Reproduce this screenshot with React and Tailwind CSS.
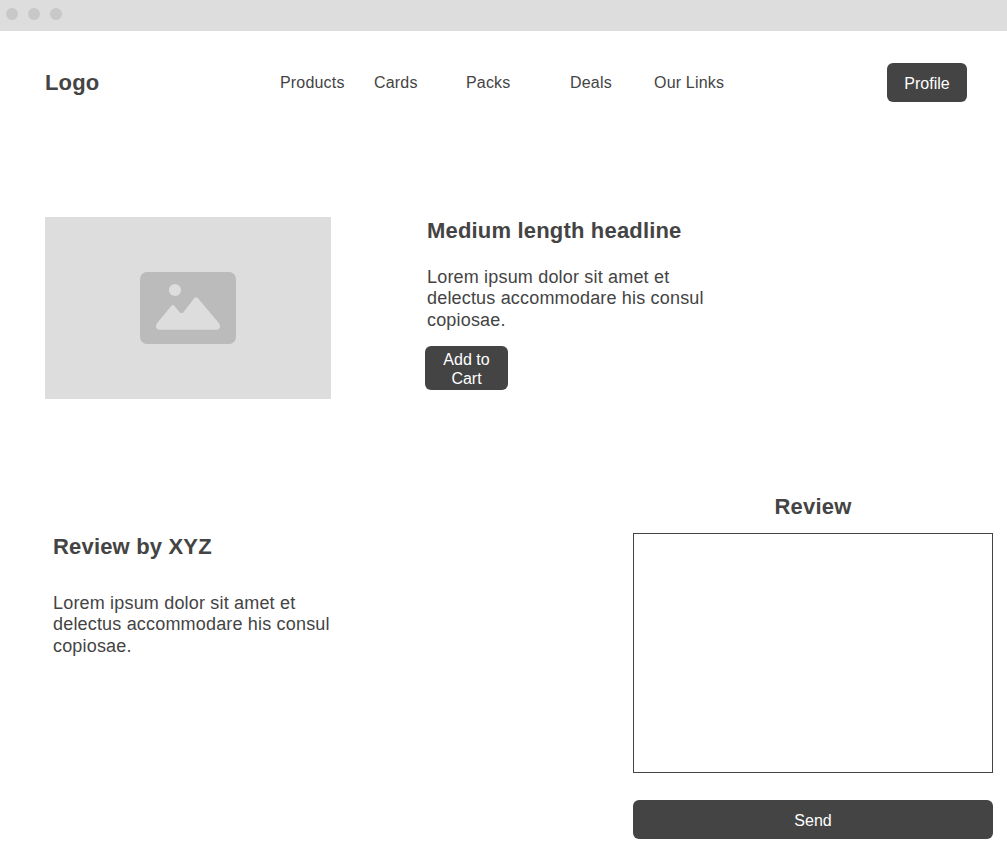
const nav = [
  { label: "Products", place: "ml-[181px] w-[94px]" },
  { label: "Cards", place: "w-[92px]" },
  { label: "Packs", place: "w-[104px]" },
  { label: "Deals", place: "w-[84px]" },
  { label: "Our Links", place: "w-[100px]" },
];

function WindowBar() {
  return (
    <div className="flex h-[31px] items-start gap-[10px] bg-[#ddd] pt-2 pl-[6px]">
      <span className="size-3 rounded-full bg-[#c8c8c8]" />
      <span className="size-3 rounded-full bg-[#c8c8c8]" />
      <span className="size-3 rounded-full bg-[#c8c8c8]" />
    </div>
  );
}

function Lorem() {
  return (
    <p className="text-[18px] leading-[21.6px] tracking-[0.18px] whitespace-nowrap">
      Lorem ipsum dolor sit amet et
      <br />
      delectus accommodare his consul
      <br />
      copiosae.
    </p>
  );
}

export default function App() {
  return (
    <div className="h-[863px] w-[1007px] overflow-hidden bg-white font-['Liberation_Sans',Arial,sans-serif] text-[#444]">
      <WindowBar />
      <header className="mt-8 flex h-[39px] items-center pr-10 pl-[45px]">
        <div className="w-[54px] text-[22px] leading-[26px] font-bold tracking-[0.18px]">Logo</div>
        <nav className="flex text-base leading-5 tracking-[0.18px]">
          {nav.map((n) => (
            <a key={n.label} className={n.place}>{n.label}</a>
          ))}
        </nav>
        <button className="ml-auto h-[39px] w-20 rounded-[6px] bg-[#444] pt-[2px] text-base text-white">Profile</button>
      </header>

      <section className="mt-[115px] flex h-[182px] pl-[45px]">
        <div className="flex h-[182px] w-[286px] items-center justify-center bg-[#ddd]">
          <svg width="96" height="72" viewBox="0 0 96 72">
            <rect width="96" height="72" rx="7" fill="#bbb" />
            <circle cx="35" cy="18" r="6.1" fill="#ddd" />
            <path d="M17 51.3 31 34.2Q32.8 32 34.6 34.2L39.6 40.2Q41.5 42 43.4 40.2L54 26.4Q56 24 58.2 26.4L79 51.3Q80.4 53.2 80 55.2Q79.2 57.7 76.5 57.7H19.5Q16.8 57.7 16 55.2Q15.6 53.2 17 51.3Z" fill="#ddd" />
          </svg>
        </div>
        <div className="ml-[94px] flex flex-col items-start">
          <h1 className="mt-px ml-[2px] text-[22px] leading-[26px] font-bold tracking-[0.18px]">Medium length headline</h1>
          <div className="mt-[22.6px] ml-[2px]"><Lorem /></div>
          <button className="mt-[14.6px] h-11 w-[83px] rounded-[6px] bg-[#444] pt-[2px] text-base leading-[19px] text-white">
            Add to<br />Cart
          </button>
        </div>
      </section>

      <section className="mt-[94px] flex pl-[53px]">
        <article className="mt-[41px] w-[580px]">
          <h2 className="text-[22px] leading-[26px] font-bold tracking-[0.18px]">Review by XYZ</h2>
          <div className="mt-[32.6px]"><Lorem /></div>
        </article>
        <div className="w-[360px]">
          <h2 className="mt-px text-center text-[22px] leading-[26px] font-bold tracking-[0.18px]">Review</h2>
          <textarea aria-label="Review" className="mt-[13px] block h-[240px] w-[360px] resize-none border border-[#444] bg-white" />
          <button className="mt-[27px] h-[39px] w-[360px] rounded-[6px] bg-[#444] pt-[2px] text-base text-white">Send</button>
        </div>
      </section>
    </div>
  );
}
